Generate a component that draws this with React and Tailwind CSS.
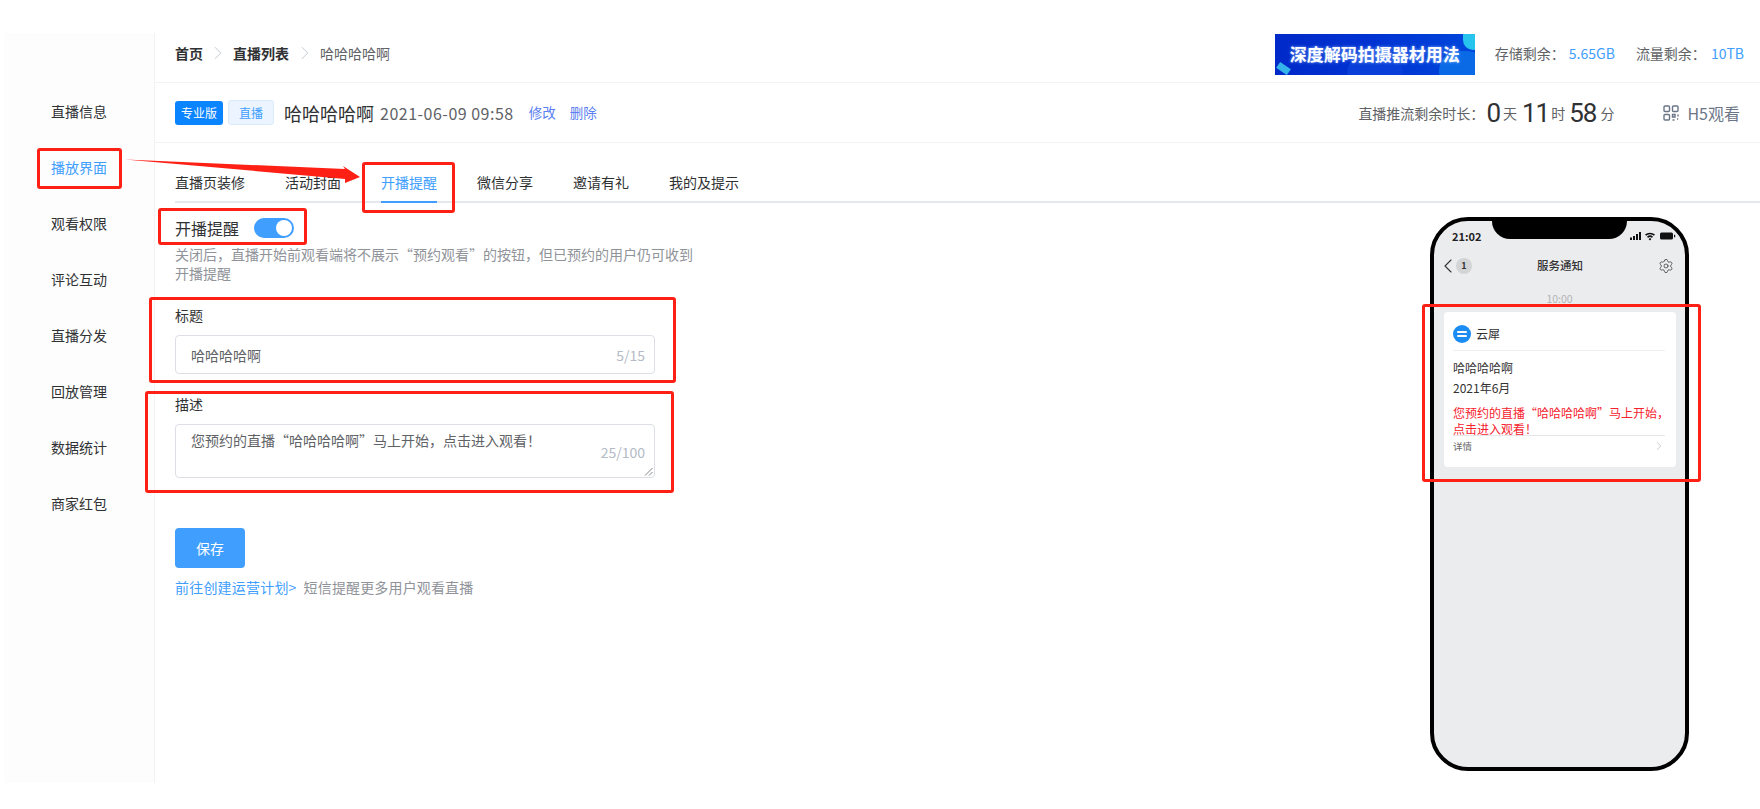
import React from 'react';
import { ChevronLeft, ChevronRight, Settings } from 'lucide-react';

const fontStack = "font-['Noto_Sans_CJK_SC','Noto_Sans',sans-serif]";
const menus = ['直播信息', '播放界面', '观看权限', '评论互动', '直播分发', '回放管理', '数据统计', '商家红包'];
const tabs = ['直播页装修', '活动封面', '开播提醒', '微信分享', '邀请有礼', '我的及提示'];

const Sidebar = () => (
  <aside className="w-[151px] h-[750px] shrink-0 bg-[#fdfdfe] border-r border-[#f2f3f5] pt-[50px]">
    {menus.map((m) => (
      <div key={m} className={`h-14 flex items-center pl-[47px] text-sm ${m === '播放界面' ? 'text-[#409eff]' : 'text-[#303133]'}`}>
        {m}
      </div>
    ))}
  </aside>
);

const Banner = () => (
  <div className="relative w-[200px] h-[41px] overflow-hidden bg-gradient-to-r from-[#0029c9] via-[#0033d2] to-[#0046dc] flex items-center justify-center">
    <div className="absolute -bottom-7 left-[72px] w-14 h-14 rounded-full bg-[#0a3ed8]" />
    <div className="absolute -right-3 -bottom-4 w-12 h-10 rounded-full bg-[#0a6ae6]" />
    <div className="absolute -right-2 -top-3 w-5 h-7 rounded-full bg-[#27c4ee]" />
    <div className="absolute left-[2px] bottom-[3px] w-[13px] h-[7px] rotate-[35deg] bg-[#35b4ea]" />
    <span className="relative text-white font-bold text-[17px] whitespace-nowrap [text-shadow:0_0_3px_#8fb8ff]">深度解码拍摄器材用法</span>
  </div>
);

const TopBar = () => (
  <div className="h-[50px] border-b border-[#f2f3f5] flex items-center pl-5 pr-4 pb-[6px] text-sm">
    <div className="flex items-center mb-[3px]">
      <span className="font-semibold text-[#303133]">首页</span>
      <ChevronRight size={22} strokeWidth={1} className="text-[#c0c4cc] mx-1" />
      <span className="font-semibold text-[#303133]">直播列表</span>
      <ChevronRight size={22} strokeWidth={1} className="text-[#c0c4cc] mx-[4.5px]" />
      <span className="text-[#606266]">哈哈哈哈啊</span>
    </div>
    <div className="ml-auto flex items-center text-[#606266]">
      <Banner />
      <div className="ml-5 flex items-center mb-[3px]">
        <span>存储剩余：</span>
        <span className="ml-1 text-[#409eff]">5.65GB</span>
        <span className="ml-[21px]">流量剩余：</span>
        <span className="ml-[5px] text-[#409eff]">10TB</span>
      </div>
    </div>
  </div>
);

const QrIcon = () => (
  <svg width="16" height="16" viewBox="0 0 16 16" fill="none" stroke="#6b7588" strokeWidth="1.4">
    <rect x="1" y="1" width="5.5" height="5.5" rx="1" />
    <rect x="9.5" y="1" width="5.5" height="5.5" rx="1" />
    <rect x="1" y="9.5" width="5.5" height="5.5" rx="1" />
    <path d="M9.5 9.5h2.5v2.5h-2.5zM15 9.5v2M9.5 15h2M14 14h1.2" />
  </svg>
);

const Digit = ({ className, children }) => (
  <span className={`font-['Roboto',sans-serif] text-[26px] leading-none tracking-[-1px] text-[#303133] ${className}`}>{children}</span>
);

const TitleRow = () => (
  <div className="h-[60px] border-b border-[#f2f3f5] flex items-center pl-5 pr-5">
    <span className="w-12 h-6 rounded-[3px] bg-[#0a84ff] text-white text-xs flex items-center justify-center">专业版</span>
    <span className="ml-[5px] w-[46px] h-[25px] rounded-[3px] bg-[#ecf5ff] border border-[#d9ecff] text-[#409eff] text-xs flex items-center justify-center">直播</span>
    <span className="ml-[10px] text-lg text-[#303133]">哈哈哈哈啊</span>
    <span className="ml-[6px] text-base tracking-[0.5px] text-[#606266]">2021-06-09 09:58</span>
    <span className="ml-[15px] text-[13.5px] text-[#5a7ff0]">修改</span>
    <span className="ml-[14px] text-[13.5px] text-[#5a7ff0]">删除</span>
    <div className="ml-auto flex items-center text-[#606266] text-sm">
      <span>直播推流剩余时长：</span>
      <Digit className="ml-[2px]">0</Digit>
      <span className="ml-[3px]">天</span>
      <Digit className="ml-[5px]">11</Digit>
      <span className="ml-[2px]">时</span>
      <Digit className="ml-1">58</Digit>
      <span className="ml-1">分</span>
      <span className="ml-[49px]"><QrIcon /></span>
      <span className="ml-2 text-base text-[#6b7588]">H5观看</span>
    </div>
  </div>
);

const Tabs = () => (
  <div className="ml-5 h-[60px] border-b-2 border-[#e4e7ed] flex gap-10 text-sm">
    {tabs.map((t) => (
      <div key={t} className={`h-[60px] pt-[29px] leading-5 ${t === '开播提醒' ? 'text-[#409eff] border-b-2 border-[#409eff]' : 'text-[#303133]'}`}>
        {t}
      </div>
    ))}
  </div>
);

const Form = () => (
  <div className="ml-5 w-[480px] shrink-0 text-sm">
    <div className="mt-[15px] h-5 flex items-center">
      <span className="text-base text-[#303133]">开播提醒</span>
      <span className="ml-[15px] w-10 h-5 rounded-full bg-[#409eff] flex items-center justify-end pr-[2px]">
        <span className="w-4 h-4 rounded-full bg-white" />
      </span>
    </div>
    <p className="mt-[7px] w-[525px] text-[#909399] leading-[19px]">关闭后，直播开始前观看端将不展示“预约观看”的按钮，但已预约的用户仍可收到开播提醒</p>
    <div className="mt-[22px] h-5 leading-5 text-[#303133]">标题</div>
    <div className="mt-[10px] h-[39px] rounded border border-[#dcdfe6] flex items-center pl-[15px] pr-[9px] text-[#606266]">
      哈哈哈哈啊
      <span className="ml-auto text-[#b4bac6]">5/15</span>
    </div>
    <div className="mt-[20px] h-5 leading-5 text-[#303133]">描述</div>
    <div className="relative mt-[10px] h-[54px] rounded border border-[#dcdfe6] pl-[15px] pr-[9px] pt-[5px] text-[#606266] leading-5">
      您预约的直播“哈哈哈哈啊”马上开始，点击进入观看！
      <span className="absolute right-[9px] top-[17px] text-[#b4bac6]">25/100</span>
      <svg className="absolute right-[1px] bottom-[1px]" width="9" height="9" viewBox="0 0 9 9" stroke="#666" strokeWidth="0.8">
        <path d="M1 8.5 8.5 1M5 8.5 8.5 5" />
      </svg>
    </div>
    <button className="mt-[50px] w-[70px] h-10 rounded bg-[#409eff] text-white">保存</button>
    <div className="mt-[9px] leading-5 text-[#909399]">
      <span className="text-[#409eff] tracking-[0.2px]">前往创建运营计划&gt;</span>
      <span className="ml-[7px] tracking-[0.15px]">短信提醒更多用户观看直播</span>
    </div>
  </div>
);

const StatusIcons = () => (
  <svg width="46" height="10" viewBox="0 0 46 10" fill="#111">
    <rect x="0" y="6.5" width="2" height="2.5" />
    <rect x="3" y="5" width="2" height="4" />
    <rect x="6" y="3" width="2" height="6" />
    <rect x="9" y="1" width="2" height="8" />
    <path d="M15 3.6a7.4 7.4 0 0 1 10 0l-1.1 1.2a5.8 5.8 0 0 0-7.8 0zM17 5.7a4.4 4.4 0 0 1 6 0l-1.1 1.2a2.9 2.9 0 0 0-3.8 0zM20 6.8l1.3 1.4L20 9.5l-1.3-1.3z" />
    <rect x="30" y="1.5" width="13" height="7" rx="1.5" />
    <rect x="44" y="3.8" width="1.2" height="2.5" />
  </svg>
);

const Phone = () => (
  <div className="relative mt-[14px] mr-[71px] ml-auto w-[259px] h-[554px] rounded-[38px] border-4 border-black bg-[#ebecee] overflow-hidden">
    <div className="absolute top-0 left-[58px] w-[135px] h-[18px] rounded-b-[20px] bg-black" />
    <div className="h-[30px] pl-[18px] pr-[9px] flex items-center justify-between">
      <span className="text-[11px] font-semibold text-[#222]">21:02</span>
      <StatusIcons />
    </div>
    <div className="h-[30px] grid grid-cols-3 items-center pl-[2px] pr-[11px]">
      <div className="flex items-center">
        <ChevronLeft size={24} strokeWidth={1.1} className="text-[#333]" />
        <span className="-ml-1 w-4 h-4 rounded-full bg-[#d3d4d6] text-[9px] font-bold text-[#333] flex items-center justify-center">1</span>
      </div>
      <span className="text-center text-[11.5px] font-medium text-[#333] whitespace-nowrap translate-x-[5px]">服务通知</span>
      <Settings size={16} strokeWidth={1.1} className="text-[#333] justify-self-end" />
    </div>
    <div className="mt-3 text-center text-[10.5px] leading-3 text-[#b3b4b6]">10:00</div>
    <div className="ml-[10px] mt-[7px] w-[232px] h-[155px] rounded bg-white pl-[9px] pr-[11px] text-[#333]">
      <div className="h-[39px] pt-[5px] flex items-center border-b border-[#eeeff0]">
        <span className="w-[18px] h-[18px] rounded-full bg-[#1a8cf2] flex flex-col items-center justify-center gap-[2px]">
          <span className="w-[10px] h-[2px] bg-white rounded" />
          <span className="w-[10px] h-[2px] bg-white rounded" />
        </span>
        <span className="ml-[5px] text-xs">云犀</span>
      </div>
      <div className="mt-[7px] text-xs leading-5">哈哈哈哈啊</div>
      <div className="text-xs leading-5">2021年6月</div>
      <div className="mt-[7px] h-[30px] text-[#f5222d] text-xs leading-4 whitespace-nowrap">您预约的直播“哈哈哈哈啊”马上开始，<br />点击进入观看！</div>
      <div className="h-[21px] border-t border-[#e5e6e8] flex items-center justify-between text-[9.5px] text-[#666]">
        详情
        <ChevronRight size={14} strokeWidth={1} className="text-[#a5a6a8] -mr-[1px]" />
      </div>
    </div>
  </div>
);

// red markup that was drawn over the screenshot
const Box = ({ className }) => (
  <div className={`absolute border-[3px] border-[#ff2015] rounded-[3px] ${className}`} />
);

const Annotations = () => (
  <>
    <Box className="left-[37px] top-[148px] w-[85px] h-[41px]" />
    <Box className="left-[362px] top-[162px] w-[93px] h-[51px]" />
    <Box className="left-[158px] top-[208px] w-[149px] h-[37px]" />
    <Box className="left-[149px] top-[297px] w-[527px] h-[86px]" />
    <Box className="left-[145px] top-[391px] w-[529px] h-[102px]" />
    <Box className="left-[1422px] top-[304px] w-[279px] h-[178px]" />
    <svg className="absolute left-0 top-0 pointer-events-none" width="400" height="200" fill="#ff2015">
      <path d="M125 159.5 345 169 343 166 360 177 345 183 345 179Z" />
    </svg>
  </>
);

export default function App() {
  return (
    <div className={`relative w-[1760px] h-[809px] overflow-hidden bg-white pl-1 pt-[33px] flex ${fontStack}`}>
      <Sidebar />
      <main className="flex-1 min-w-0">
        <TopBar />
        <TitleRow />
        <Tabs />
        <div className="flex">
          <Form />
          <Phone />
        </div>
      </main>
      <Annotations />
    </div>
  );
}
